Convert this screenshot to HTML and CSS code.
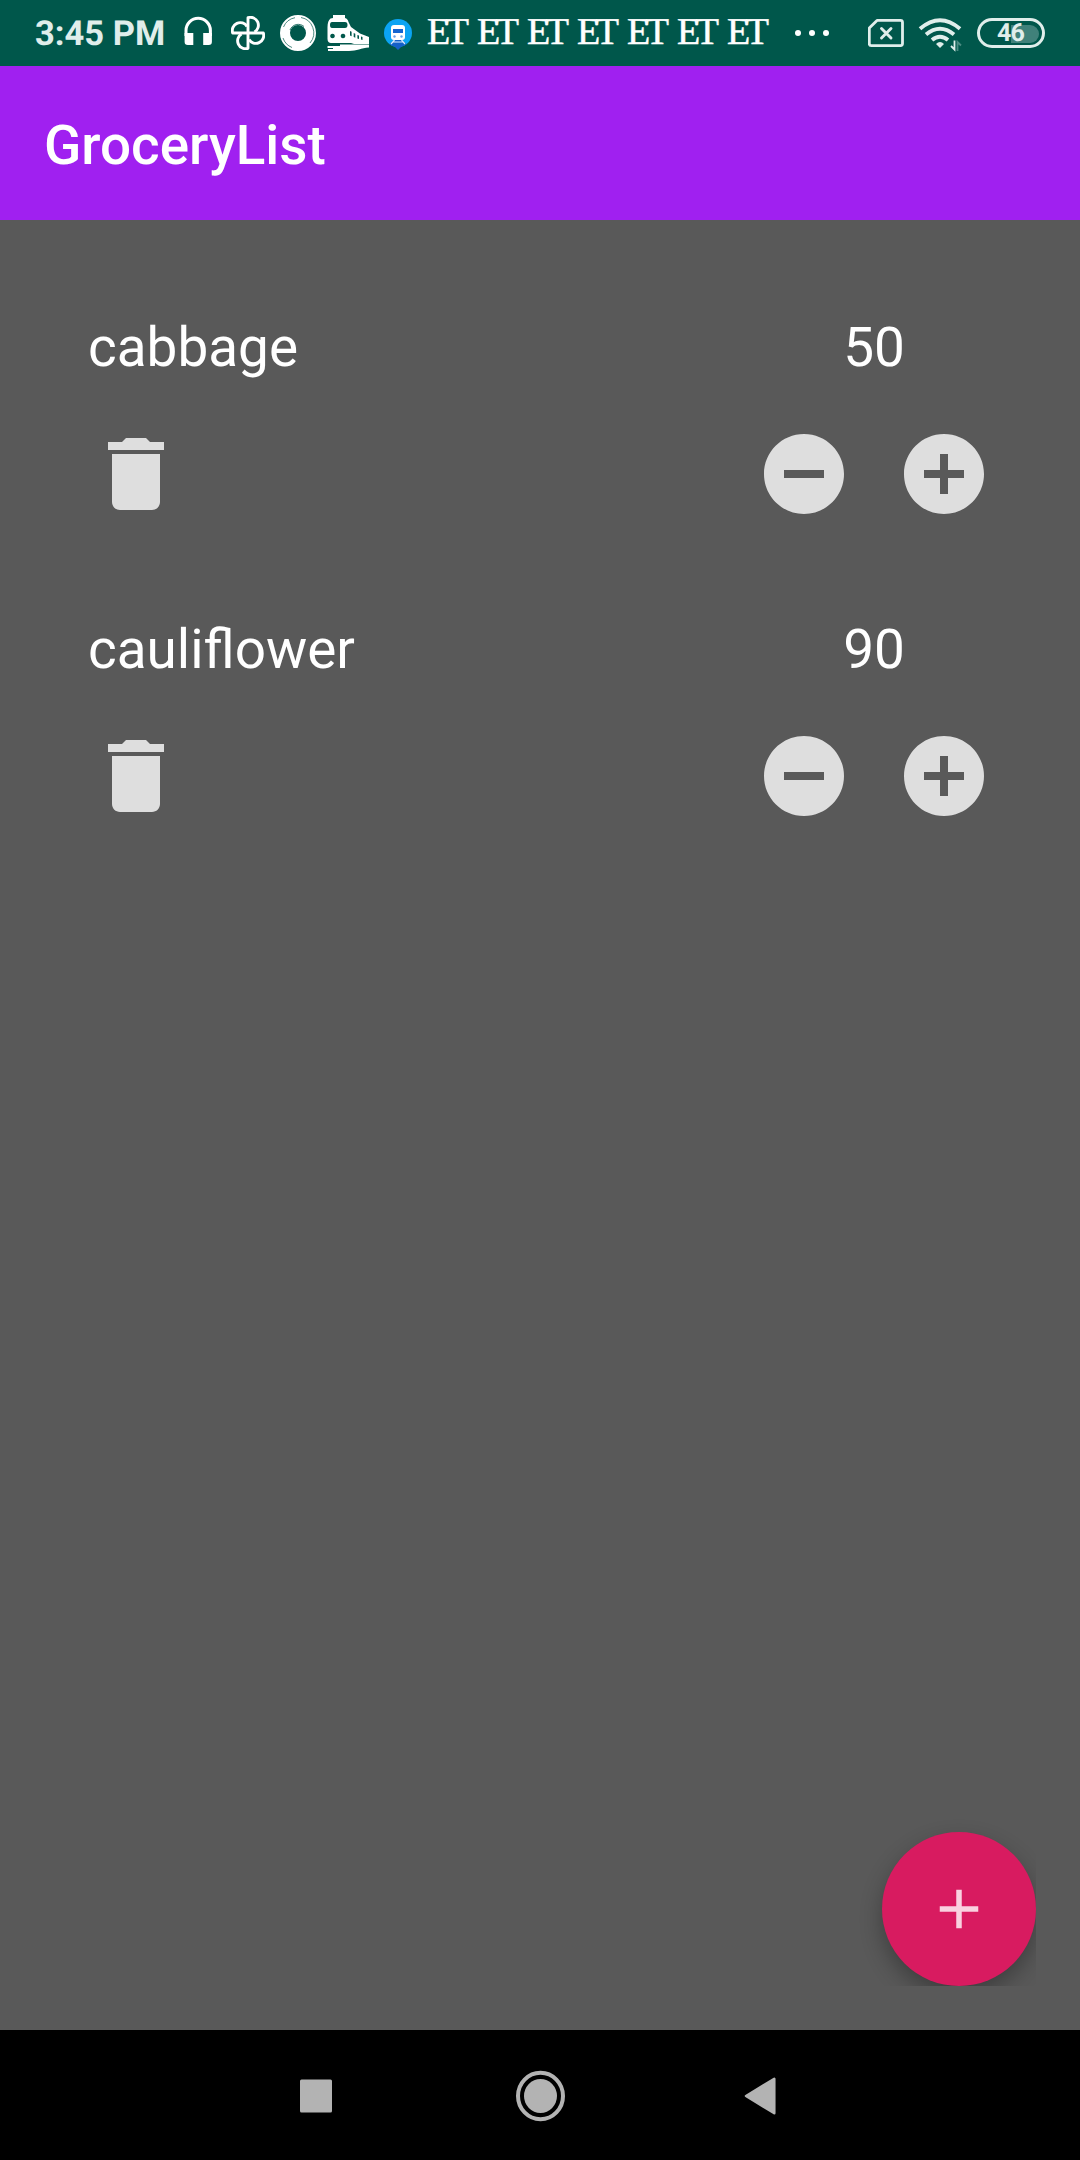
FILE: index.html
```html
<!DOCTYPE html>
<html lang="en">
<head>
<meta charset="utf-8">
<title>GroceryList</title>
<link rel="stylesheet" href="styles.css">
</head>
<body>
<svg width="0" height="0" class="defs" aria-hidden="true">
  <symbol id="delete" viewBox="0 0 24 24"><path d="M6 19c0 1.1.9 2 2 2h8c1.1 0 2-.9 2-2V7H6v12zM19 4h-3.500l-1-1h-5l-1 1H5v2h14V4z"/></symbol>
  <symbol id="minus" viewBox="0 0 24 24"><path d="M12 2C6.480 2 2 6.480 2 12s4.480 10 10 10 10-4.480 10-10S17.520 2 12 2zm5 11H7v-2h10v2z"/></symbol>
  <symbol id="plus" viewBox="0 0 24 24"><path d="M12 2C6.480 2 2 6.480 2 12s4.480 10 10 10 10-4.480 10-10S17.520 2 12 2zm5 11h-4v4h-2v-4H7v-2h4V7h2v4h4v2z"/></symbol>
</svg>
<div class="screen">
  <header class="status">
    <span class="clock">3:45 PM</span>
    <svg class="headphones" width="28" height="30" viewBox="184 16 28 30"><path d="M186 36V30.500a12.200 12.200 0 0 1 24.400 0V36" fill="none" stroke="#fff" stroke-width="3"/><path d="M184.600 33h8.700v12h-5.500a3.200 3.200 0 0 1-3.200-3.200zM203.200 33h8.700v8.800a3.200 3.200 0 0 1-3.200 3.200h-5.500z" fill="#fff"/></svg>
    <svg class="pinwheel" width="34" height="34" viewBox="-17 -17 34 34"><g fill="none" stroke="#fff" stroke-width="2.900" stroke-linejoin="round"><path d="M0 0V-15.300A7.900 7.900 0 0 1 6.500-1"/><path d="M0 0V-15.300A7.900 7.900 0 0 1 6.500-1" transform="rotate(90)"/><path d="M0 0V-15.300A7.900 7.900 0 0 1 6.500-1" transform="rotate(180)"/><path d="M0 0V-15.300A7.900 7.900 0 0 1 6.500-1" transform="rotate(270)"/></g></svg>
    <svg class="ring" width="36" height="36" viewBox="-18 -18 36 36"><circle r="13" fill="none" stroke="#fff" stroke-width="10"/><path d="M3-15.500A15.600 15.600 0 0 1 12 10M-14.500-6A15.600 15.600 0 0 1-3-15.300M-15 5A15.600 15.600 0 0 0-6 14.500" fill="none" stroke="#00574b" stroke-width=".7"/><path d="M-8-3A8.800 8.800 0 0 1 6-6.500" fill="none" stroke="#00574b" stroke-width=".8"/></svg>
    <svg class="train" width="43" height="37" viewBox="327 15 43 37"><path fill="#fff" fill-rule="evenodd" d="M333 15h12v3c2 .5 3 2 3.500 4l2.500 5 9 6.500 9 3.500v7h-15l-3-1h-20c-2 0-3.500-1.500-3.500-4V27c0-4 1-7 3-8.500l2.500-.5zM332 22q-2 0-2 3t2 3h13q2.500 0 2.500-3t-2.500-3zM332.500 33.700a2.300 2.300 0 1 0 .01 0zM343 33.700a2.300 2.300 0 1 0 .01 0zM350 31v4.500l1.600.8v-4.500zM353.700 33v4l1.600.8v-4zM357.400 35v3.500l1.600.6v-3.500zM361 36.500v3l1.500.5v-3z"/><path fill="#fff" d="M340 44.500h29v3c-8 .5-12 3.500-20 3.500h-21v-2h5v-1h-5.500v-2H340z"/></svg>
    <svg class="metro" width="28" height="32" viewBox="384 18 28 32"><circle cx="398" cy="33" r="14" fill="#0ba4f3"/><path d="M389.500 44l4.500-4h8l4.500 4q-2 2-5 2.500l-3.500 3.500-3.500-3.500q-3-.5-5-2.500z" fill="#1560c8"/><path d="M391 44l3.500-4M405 44l-3.500-4M393 42h10" stroke="#dcecff" stroke-width="1.200"/><rect x="391" y="25" width="14" height="15" rx="3" fill="#fff"/><rect x="393" y="29" width="10" height="4" fill="#1565d0"/><circle cx="394.500" cy="36.500" r="1.200" fill="#6aa0e8"/><circle cx="401.500" cy="36.500" r="1.200" fill="#6aa0e8"/></svg>
    <div class="news"><span>ET</span><span>ET</span><span>ET</span><span>ET</span><span>ET</span><span>ET</span><span>ET</span></div>
    <div class="more"><i></i><i></i><i></i></div>
    <svg class="sim" width="36" height="28" viewBox="868 19 36 28"><g fill="none" stroke="#e0eeeb" stroke-width="2.800"><path d="M877 20.400h23.500q2 0 2 2v21.200q0 2-2 2h-29.200q-2 0-2-2V28z" stroke-linejoin="round"/><path d="M881.500 28.500l9.500 9.500M891 28.500l-9.500 9.500" stroke-width="2.900" stroke-linecap="round"/></g></svg>
    <svg class="wifi" width="44" height="34" viewBox="918 18 44 34"><g fill="none" stroke="#e0eeeb" stroke-width="3.900"><path d="M920 28.800q20-17 40 0"/><path d="M926 34.600q14-11.500 28 0"/><path d="M932 40q8-6.500 16 0"/></g><path d="M936 44q4-4 8 0l-4 4z" fill="#e0eeeb"/><path d="M951 46l3.500 3.500v-9" fill="none" stroke="#e0eeeb" stroke-width="1.800"/><path d="M957.500 51v-9l3.500 3.500" fill="none" stroke="#4c8b82" stroke-width="1.800"/></svg>
    <div class="battery"><i></i><span>46</span></div>
  </header>
  <div class="appbar"><h1>GroceryList</h1></div>
  <main class="content">
    <section class="item">
      <div class="row labels"><span>cabbage</span><span class="count">50</span></div>
      <div class="row"><svg class="icon"><use href="#delete"/></svg><div class="actions"><svg class="icon"><use href="#minus"/></svg><svg class="icon"><use href="#plus"/></svg></div></div>
    </section>
    <section class="item">
      <div class="row labels"><span>cauliflower</span><span class="count">90</span></div>
      <div class="row"><svg class="icon"><use href="#delete"/></svg><div class="actions"><svg class="icon"><use href="#minus"/></svg><svg class="icon"><use href="#plus"/></svg></div></div>
    </section>
    <div class="fab"><svg width="66" height="66" viewBox="0 0 24 24"><path d="M19 13h-6v6h-2v-6H5v-2h6V5h2v6h6v2z"/></svg></div>
  </main>
  <nav class="nav">
    <svg width="48" height="50" viewBox="-24 -25 48 50"><rect x="-16" y="-16.500" width="32" height="33" rx="1.500"/></svg>
    <svg width="50" height="52" viewBox="-25.500 -26 50 52"><ellipse rx="16.500" ry="17"/><ellipse rx="22.500" ry="23.200" fill="none" stroke="#b3b3b3" stroke-width="4"/></svg>
    <svg width="48" height="50" viewBox="-20 -25 48 50"><path d="M-14 0L14.300-17.200V17.200z" stroke="#b3b3b3" stroke-width="2.500" stroke-linejoin="round"/></svg>
  </nav>
</div>
</body>
</html>
```
FILE: styles.css
```css
* { box-sizing: border-box; }
body { margin: 0; font-family: Roboto, sans-serif; text-rendering: geometricPrecision; }
.defs { position: absolute; }
svg { display: block; flex: none; }
.screen { width: 1080px; height: 2160px; display: flex; flex-direction: column; background: #595959; color: #fff; }

.status { height: 66px; background: #00574b; display: flex; align-items: center; padding-left: 35px; flex: none; }
.clock { width: 149px; font-size: 34.500px; font-weight: 700; color: #e0eeeb; white-space: nowrap; padding-top: 2px; }
.headphones { margin-top: -4px; }
.pinwheel { margin-left: 19px; }
.ring { margin-left: 15px; }
.train { margin-left: 11px; }
.metro { margin-left: 14px; margin-top: 2px; }
.news { display: flex; width: 350px; margin-left: 15px; margin-top: -2px; }
.news span { width: 50px; flex: none; font: 38px/44px "Liberation Serif", serif; letter-spacing: -4.500px; -webkit-text-stroke: .5px #fff; }
.more { display: flex; gap: 8px; margin-left: 18px; }
.more i { width: 6px; height: 6px; border-radius: 50%; background: #fff; }
.sim { margin-left: 39px; }
.wifi { margin-left: 14px; margin-top: 4px; }
.battery { margin-left: 15px; width: 68px; height: 30px; border: 3px solid #e0eeeb; border-radius: 15px; display: grid; align-items: center; padding: 0 3px; }
.battery > * { grid-area: 1 / 1; }
.battery i { justify-self: end; width: 28px; height: 18px; border-radius: 0 9px 9px 0; background: #40817a; }
.battery span { font-size: 25px; font-weight: 700; line-height: 24px; letter-spacing: -.8px; text-align: center; color: #e0eeeb; padding: 1px 1px 0 0; }

.appbar { height: 154px; flex: none; background: #a020f0; display: flex; align-items: center; padding: 6px 0 0 44px; }
h1 { margin: 0; font-size: 54.800px; font-weight: 500; line-height: 64px; }

.content { flex: 1; padding-top: 87px; position: relative; }
.item { height: 302px; padding: 0 88px; }
.row { display: flex; justify-content: space-between; align-items: center; }
.labels { height: 82px; margin-bottom: 37px; font-size: 54.900px; line-height: 82px; }
.count { width: 236px; text-align: center; }
.actions { display: flex; gap: 44px; }
.icon { width: 96px; height: 96px; fill: #dedede; }
.fab { position: absolute; right: 44px; bottom: 44px; width: 154px; height: 154px; border-radius: 50%; background: #d81b60; display: grid; place-items: center; box-shadow: 0 10px 22px rgba(0,0,0,.3); clip-path: inset(-30px 0 0 -30px); }
.fab svg { fill: #f9d1df; }

.nav { height: 130px; flex: none; background: #000; display: flex; align-items: center; justify-content: center; gap: 175px; padding-top: 1px; }
.nav svg { fill: #b3b3b3; }
```
